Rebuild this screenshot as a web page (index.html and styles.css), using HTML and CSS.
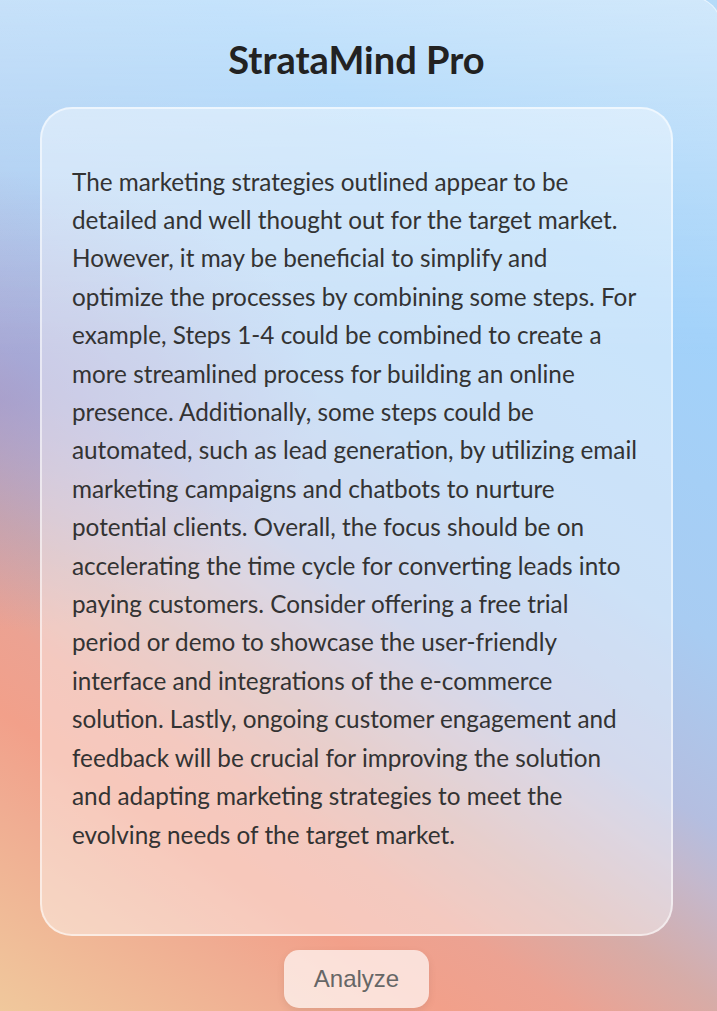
FILE: index.html
```html
<!DOCTYPE html>
<html lang="en">
<head>
<meta charset="utf-8">
<title>StrataMind Pro</title>
<link rel="stylesheet" href="styles.css">
</head>
<body>
<main class="app">
  <h1 class="title">StrataMind Pro</h1>
  <section class="card">
    <p class="result">The marketing strategies outlined appear to be detailed and well thought out for the target market. However, it may be beneficial to simplify and optimize the processes by combining some steps. For example, Steps 1-4 could be combined to create a more streamlined process for building an online presence. Additionally, some steps could be automated, such as lead generation, by utilizing email marketing campaigns and chatbots to nurture potential clients. Overall, the focus should be on accelerating the time cycle for converting leads into paying customers. Consider offering a free trial period or demo to showcase the user-friendly interface and integrations of the e-commerce solution. Lastly, ongoing customer engagement and feedback will be crucial for improving the solution and adapting marketing strategies to meet the evolving needs of the target market.</p>
  </section>
  <div class="actions">
    <button class="analyze-btn" type="button">Analyze</button>
  </div>
</main>
</body>
</html>
```
FILE: styles.css
```css
html, body {
  margin: 0;
  height: 100%;
  overflow: hidden;
}

body {
  background:
    radial-gradient(ellipse 320px 230px at 0 400px, rgba(150, 140, 200, 0.55), rgba(150, 140, 200, 0) 100%),
    linear-gradient(214deg,
      #b6dbf9 0%,
      #a2d2fa 23%,
      #a8ccf2 43%,
      #b4bee0 55.5%,
      #c4b8cc 60%,
      #d6aca8 67%,
      #eca292 74%,
      #f2a08a 80%,
      #f0ac92 86%,
      #f0c89c 100%);
  font-family: "Lato", "Open Sans", sans-serif;
}

.app {
  margin: -4px -5px 0 -60px;
  padding: 0 48px 40px 99px;
  min-height: 1100px;
  border: 1px solid rgba(255, 255, 255, 0.5);
  border-radius: 32px;
  background: linear-gradient(180deg, rgba(255, 255, 255, 0.38) 0, rgba(255, 255, 255, 0.12) 200px, rgba(255, 255, 255, 0) 360px);
}

.title {
  margin: 40px 0 24px;
  font-family: "Lato", sans-serif;
  font-weight: 700;
  font-size: 38px;
  line-height: 1.2;
  color: #222;
  text-align: center;
}

.card {
  border: 2px solid rgba(255, 255, 255, 0.55);
  border-radius: 32px;
  background: rgba(255, 255, 255, 0.42);
  padding: 54px 30px 80px;
}

.result {
  margin: 0;
  font-family: "Lato", sans-serif;
  font-size: 24.3px;
  line-height: 38.4px;
  color: #333;
}

.actions {
  display: flex;
  justify-content: center;
  margin-top: 14px;
}

.analyze-btn {
  font-family: "Liberation Sans", Arial, sans-serif;
  font-size: 24px;
  line-height: normal;
  color: #666;
  padding: 15px 30px;
  border: none;
  border-radius: 15px;
  background: rgba(255, 255, 255, 0.67);
  box-shadow: 0 3px 8px rgba(0, 0, 0, 0.08);
  cursor: pointer;
}
```
